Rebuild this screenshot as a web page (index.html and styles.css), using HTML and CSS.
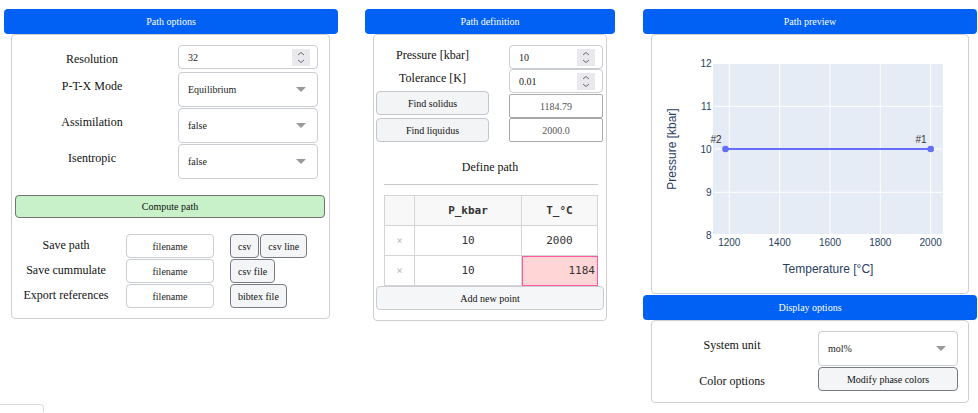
FILE: index.html
```html
<!DOCTYPE html>
<html lang="en">
<head>
<meta charset="utf-8">
<title>Path tools</title>
<link rel="stylesheet" href="styles.css">
</head>
<body>
<div class="page">
  <section class="col col-opts">
    <div class="hdr">Path options</div>
    <div class="panel panel-opts">
      <div class="form-grid">
        <label class="lbl">Resolution</label>
        <div class="field num num-first"><span class="val">32</span><span class="spin"><svg width="18" height="17" viewBox="0 0 18 17"><path d="M6 6 L9 3.5 L12 6" fill="none" stroke="#6b6b6b" stroke-width="1"/><path d="M6 11 L9 13.5 L12 11" fill="none" stroke="#6b6b6b" stroke-width="1"/></svg></span></div>
        <label class="lbl">P-T-X Mode</label>
        <div class="field select"><span class="val">Equilibrium</span><span class="caret"></span></div>
        <label class="lbl">Assimilation</label>
        <div class="field select"><span class="val">false</span><span class="caret"></span></div>
        <label class="lbl">Isentropic</label>
        <div class="field select"><span class="val">false</span><span class="caret"></span></div>
      </div>
      <button class="btn btn-compute">Compute path</button>
      <div class="save-grid">
        <span class="lbl2">Save path</span>
        <div class="fname">filename</div>
        <div class="btns"><button class="btn sm">csv</button><button class="btn sm">csv line</button></div>
        <span class="lbl2">Save cummulate</span>
        <div class="fname">filename</div>
        <div class="btns"><button class="btn sm">csv file</button></div>
        <span class="lbl2">Export references</span>
        <div class="fname">filename</div>
        <div class="btns"><button class="btn sm">bibtex file</button></div>
      </div>
    </div>
  </section>

  <section class="col col-def">
    <div class="hdr">Path definition</div>
    <div class="panel panel-def">
      <div class="def-top">
        <div class="def-left">
          <div class="lbl3">Pressure [kbar]</div>
          <div class="lbl3">Tolerance [K]</div>
          <button class="btn btn-light">Find solidus</button>
          <button class="btn btn-light btn-liq">Find liquidus</button>
        </div>
        <div class="def-right">
          <div class="field num"><span class="val">10</span><span class="spin"><svg width="18" height="17" viewBox="0 0 18 17"><path d="M6 6 L9 3.5 L12 6" fill="none" stroke="#6b6b6b" stroke-width="1"/><path d="M6 11 L9 13.5 L12 11" fill="none" stroke="#6b6b6b" stroke-width="1"/></svg></span></div>
          <div class="field num"><span class="val">0.01</span><span class="spin"><svg width="18" height="17" viewBox="0 0 18 17"><path d="M6 6 L9 3.5 L12 6" fill="none" stroke="#6b6b6b" stroke-width="1"/><path d="M6 11 L9 13.5 L12 11" fill="none" stroke="#6b6b6b" stroke-width="1"/></svg></span></div>
          <div class="out out-first">1184.79</div>
          <div class="out">2000.0</div>
        </div>
      </div>
      <div class="define-title">Define path</div>
      <div class="rule"></div>
      <table class="pts">
        <thead>
          <tr><th class="c-del"></th><th class="c-p">P_kbar</th><th class="c-t">T_°C</th></tr>
        </thead>
        <tbody>
          <tr><td class="c-del">×</td><td>10</td><td>2000</td></tr>
          <tr><td class="c-del">×</td><td>10</td><td class="active">1184</td></tr>
        </tbody>
      </table>
      <button class="btn btn-add">Add new point</button>
    </div>
  </section>

  <section class="col col-prev">
    <div class="hdr">Path preview</div>
    <div class="panel panel-prev">
      <svg class="plot" width="316" height="258" viewBox="0 0 316 258">
        <rect x="61" y="28" width="230" height="172" fill="#e5ecf6"/>
        <g stroke="#ffffff" stroke-width="1">
          <line x1="77.3" y1="28" x2="77.3" y2="200"/>
          <line x1="127.7" y1="28" x2="127.7" y2="200"/>
          <line x1="178" y1="28" x2="178" y2="200"/>
          <line x1="228.3" y1="28" x2="228.3" y2="200"/>
          <line x1="278.7" y1="28" x2="278.7" y2="200"/>
          <line x1="61" y1="28.5" x2="291" y2="28.5"/>
          <line x1="61" y1="71.3" x2="291" y2="71.3"/>
          <line x1="61" y1="114" x2="291" y2="114"/>
          <line x1="61" y1="157.3" x2="291" y2="157.3"/>
          <line x1="61" y1="199.5" x2="291" y2="199.5"/>
        </g>
        <line x1="73.5" y1="114" x2="278.7" y2="114" stroke="#636efa" stroke-width="2"/>
        <circle cx="73.5" cy="114" r="3.3" fill="#636efa"/>
        <circle cx="278.7" cy="114" r="3.3" fill="#636efa"/>
        <g class="ptxt">
          <text x="69.5" y="107.5" text-anchor="end">#2</text>
          <text x="274.5" y="107.5" text-anchor="end">#1</text>
        </g>
        <g class="tick" text-anchor="end">
          <text x="59.5" y="31.8">12</text>
          <text x="59.5" y="74.8">11</text>
          <text x="59.5" y="117.5">10</text>
          <text x="59.5" y="160.8">9</text>
          <text x="59.5" y="203.5">8</text>
        </g>
        <g class="tick" text-anchor="middle">
          <text x="77.3" y="211">1200</text>
          <text x="127.7" y="211">1400</text>
          <text x="178" y="211">1600</text>
          <text x="228.3" y="211">1800</text>
          <text x="278.7" y="211">2000</text>
        </g>
        <text class="atitle" x="176" y="237.5" text-anchor="middle">Temperature [°C]</text>
        <text class="atitle" x="0" y="0" text-anchor="middle" transform="translate(23.5 114) rotate(-90)">Pressure [kbar]</text>
      </svg>
    </div>
    <div class="hdr hdr-2">Display options</div>
    <div class="panel panel-disp">
      <div class="disp-grid">
        <label class="lbl">System unit</label>
        <div class="field select"><span class="val">mol%</span><span class="caret"></span></div>
        <label class="lbl">Color options</label>
        <button class="btn btn-mod">Modify phase colors</button>
      </div>
    </div>
  </section>
</div>
<div class="stub"></div>
</body>
</html>
```

FILE: styles.css
```css
* { box-sizing: border-box; }

html, body { overflow: hidden; }

body {
  margin: 0;
  background: #ffffff;
  color: #111111;
  font-family: "Liberation Serif", "Times New Roman", serif;
}

.page {
  display: flex;
  align-items: flex-start;
  padding: 9px 0 0 4px;
}

.col { display: flex; flex-direction: column; }
.col-opts { width: 334px; }
.col-def { width: 250px; margin-left: 27px; }
.col-prev { width: 334px; margin-left: 28px; }

.hdr {
  height: 25px;
  background: #0061f4;
  color: #ffffff;
  border-radius: 4px;
  font-size: 10px;
  display: flex;
  align-items: center;
  justify-content: center;
}
.hdr-2 { margin-top: 1px; }

.panel {
  margin: 0 8px;
  border: 1px solid #cfcfcf;
  border-radius: 4px;
  background: #fff;
}
.col-opts .panel { margin: 0 8px 0 7px; }

/* generic fields */
.field {
  display: flex;
  align-items: center;
  border: 1px solid #c9ccd1;
  border-radius: 4px;
  background: #fff;
  font-size: 10px;
  color: #222;
}
.field .val { flex: 1; padding-left: 9px; }
.num { height: 24px; }
.spin {
  width: 18px;
  height: 17px;
  background: #e9e9ed;
  margin-right: 7px;
  display: flex;
}
.select { height: 35px; }
.caret {
  width: 0;
  height: 0;
  border-left: 5px solid transparent;
  border-right: 5px solid transparent;
  border-top: 5px solid #999999;
  margin-right: 11px;
}

.lbl {
  font-size: 12px;
  line-height: 14px;
  padding-top: 7px;
  text-align: center;
  align-self: start;
}

.btn {
  font-family: "Liberation Serif", "Times New Roman", serif;
  font-size: 10px;
  color: #111;
  background: #f4f5f7;
  border: 1px solid #777a80;
  border-radius: 4px;
  padding: 0 7px;
  height: 24px;
  cursor: pointer;
}

/* Path options */
.panel-opts { padding: 10px 0 10px 0; }
.form-grid {
  display: grid;
  grid-template-columns: 1fr 140px;
  column-gap: 6px;
  row-gap: 1px;
  padding-right: 11px;
}
.num-first { margin-bottom: 2px; }

.btn-compute {
  display: block;
  width: calc(100% - 7px);
  margin: 16px 4px 0 3px;
  height: 23px;
  background: #c8f0c9;
  border-color: #6e7470;
}

.save-grid {
  display: grid;
  grid-template-columns: 108px 88px auto;
  column-gap: 6px;
  row-gap: 1px;
  margin-top: 16px;
}
.save-grid .btns { margin-left: 10px; display: flex; gap: 1px; }
.lbl2 {
  font-size: 12px;
  line-height: 14px;
  padding-top: 4px;
  text-align: center;
}
.fname {
  height: 24px;
  border: 1px solid #c9ccd1;
  border-radius: 4px;
  font-size: 10px;
  display: flex;
  align-items: center;
  justify-content: center;
  color: #222;
}

/* Path definition */
.panel-def { padding: 10px 2px 10px 2px; }
.def-top { display: flex; gap: 20px; }
.def-left { width: 113px; display: flex; flex-direction: column; }
.def-right { width: 94px; display: flex; flex-direction: column; }
.lbl3 {
  height: 23px;
  font-size: 12px;
  line-height: 14px;
  padding-top: 3px;
  text-align: center;
}
.btn-light {
  width: 100%;
  height: 24px;
  border-color: #c3c6cb;
  background: #f3f4f6;
}
.btn-liq { margin-top: 3px; }
.out {
  height: 24px;
  border: 1px solid #a9a9a9;
  border-radius: 2px;
  font-size: 10px;
  color: #555;
  display: flex;
  align-items: center;
  justify-content: center;
}
.out-first { margin-top: 1px; }

.define-title {
  margin-top: 18px;
  font-size: 12px;
  line-height: 14px;
  text-align: center;
}
.rule {
  height: 1px;
  background: #c8c8c8;
  margin: 10px 6px 0 8px;
}

.pts {
  margin: 10px 0 0 8px;
  width: 213px;
  border-collapse: collapse;
  font-family: "DejaVu Sans Mono", "Liberation Mono", monospace;
  font-size: 11px;
  color: #333;
  table-layout: fixed;
}
.pts th, .pts td {
  border: 1px solid #d4d4d4;
  height: 30px;
  padding: 0 3px;
  text-align: center;
}
.pts th { background: #f8f8f8; font-weight: bold; }
.pts .c-del { width: 30px; color: #b8b8b8; font-size: 10px; }
.pts .c-p { width: 107px; }
.pts .c-t { width: 76px; }
.pts td.active {
  background: #ffd5d5;
  outline: 1px solid #ff5aa0;
  outline-offset: -1px;
  text-align: right;
  padding-right: 2px;
}

.btn-add {
  display: block;
  width: 100%;
  height: 24px;
  margin-top: 0;
  border-color: #cacdd2;
  background: #f5f6f8;
}

/* Path preview */
.panel-prev { height: 260px; }
.plot { display: block; }
.plot text { font-family: "Liberation Sans", Arial, sans-serif; fill: #2a3f5f; }
.plot .tick text { font-size: 10px; }
.plot .ptxt text { font-size: 10px; fill: #333; }
.plot .atitle { font-size: 12px; }

.panel-disp { padding: 10px 10px 11px 0; }
.disp-grid {
  display: grid;
  grid-template-columns: 1fr 140px;
  column-gap: 6px;
  row-gap: 1px;
}
.btn-mod {
  height: 24px;
  border-color: #777a80;
}

.stub {
  width: 44px;
  height: 8px;
  margin-top: 1px;
  border: 1px solid #dcdcdc;
  border-left: none;
  border-bottom: none;
  border-top-right-radius: 4px;
}
```
